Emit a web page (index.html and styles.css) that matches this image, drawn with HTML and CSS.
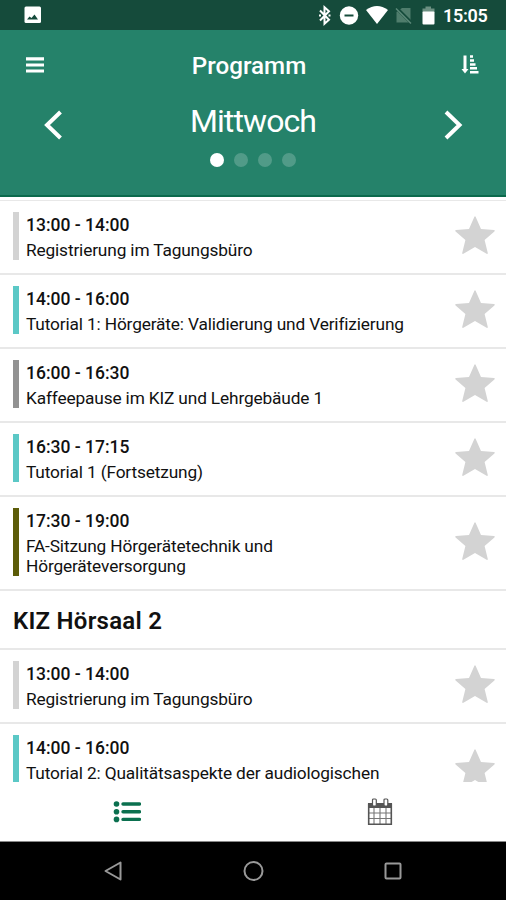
FILE: index.html
```html
<!DOCTYPE html>
<html lang="de">
<head>
<meta charset="utf-8">
<title>Programm</title>
<link rel="stylesheet" href="styles.css">
</head>
<body>
<svg width="0" height="0" class="defs"><symbol id="star" viewBox="0 0 40 38"><path d="M19.400.8q.6-.9 1.200 0L26 12.900l13 1.200q1.300.3.400 1.300L29.600 24l3.200 13q0 1.200-1.200.8L20 31 8.400 37.800q-1.200.4-1.200-.8l3.200-13L.6 15.400q-.9-1 .4-1.300l13-1.200z" fill="#d3d3d3"/></symbol></svg>
<div class="status">
  <svg class="photo" width="18" height="18" viewBox="0 0 18 18"><rect x=".5" y=".5" width="16.500" height="16.500" rx="1.500" fill="#fff"/><path d="M3 13.500l2.500-3 2 1.500 3-3.500 3.500 5z" fill="#154b3b"/></svg>
  <svg width="190" height="30" viewBox="0 0 190 30">
    <path d="M8 10.500l9 9.300-4.500 4V7.200l4.500 4-9 9.300" fill="none" stroke="#fff" stroke-width="2"/>
    <path d="M7 15.500h2M16.500 15.500h2" stroke="#fff" stroke-width="1.800"/>
    <circle cx="37" cy="15.500" r="9.200" fill="#fff"/><path d="M32.500 15.500h9" stroke="#154b3b" stroke-width="2"/>
    <path d="M54 10q11-8 22 0l-11 14z" fill="#fff"/>
    <path d="M90 8h8.500v14.500H84.500V12z" fill="#4f7d6c"/><path d="M84 7.500l16 16" stroke="#154b3b" stroke-width="3.400"/><path d="M84 8.500l15 15" stroke="#5d8979" stroke-width="1.500"/>
    <path d="M113.500 6.500h5.500V9h-5.500z" fill="#6d9082"/><path d="M110.500 8.500h12v4h-12z" fill="#6d9082"/><rect x="110.500" y="11.500" width="12" height="13" rx="1" fill="#fff"/>
  </svg>
  <span class="clock">15:05</span>
</div>
<header class="header">
  <div class="topbar">
    <svg width="20" height="20" viewBox="0 0 20 20"><path d="M1 3.800h18M1 10h18M1 16h18" stroke="#fff" stroke-width="3.200"/></svg>
    <h1>Programm</h1>
    <svg width="20" height="20" viewBox="0 0 20 20"><path d="M5 .5v15" stroke="#fff" stroke-width="3"/><path d="M1.500 14h7L5 18.500z" fill="#fff"/><path d="M10 1.500h3M10 5.500h4M10 9.400h5.500M10 13.300h7M10 17.200h8.500" stroke="#fff" stroke-width="2.500"/></svg>
  </div>
  <div class="dayrow">
    <svg width="20" height="30" viewBox="0 0 20 30"><path d="M17.500 2L4 15l13.500 13" fill="none" stroke="#fff" stroke-width="4"/></svg>
    <h2>Mittwoch</h2>
    <svg width="20" height="30" viewBox="0 0 20 30"><path d="M3 2l13.500 13L3 28" fill="none" stroke="#fff" stroke-width="4"/></svg>
  </div>
  <div class="dots"><i class="on"></i><i></i><i></i><i></i></div>
</header>
<main class="list">
  <div class="row"><span class="bar light"></span><div class="info"><b>13:00 - 14:00</b><p>Registrierung im Tagungsbüro</p></div><svg class="star"><use href="#star"/></svg></div>
  <div class="row"><span class="bar teal"></span><div class="info"><b>14:00 - 16:00</b><p>Tutorial 1: Hörgeräte: Validierung und Verifizierung</p></div><svg class="star"><use href="#star"/></svg></div>
  <div class="row"><span class="bar gray"></span><div class="info"><b>16:00 - 16:30</b><p>Kaffeepause im KIZ und Lehrgebäude 1</p></div><svg class="star"><use href="#star"/></svg></div>
  <div class="row"><span class="bar teal"></span><div class="info"><b>16:30 - 17:15</b><p>Tutorial 1 (Fortsetzung)</p></div><svg class="star"><use href="#star"/></svg></div>
  <div class="row"><span class="bar olive"></span><div class="info"><b>17:30 - 19:00</b><p>FA-Sitzung Hörgerätetechnik und<br>Hörgeräteversorgung</p></div><svg class="star"><use href="#star"/></svg></div>
  <h3>KIZ Hörsaal 2</h3>
  <div class="row"><span class="bar light"></span><div class="info"><b>13:00 - 14:00</b><p>Registrierung im Tagungsbüro</p></div><svg class="star"><use href="#star"/></svg></div>
  <div class="row two-line"><span class="bar teal"></span><div class="info"><b>14:00 - 16:00</b><p>Tutorial 2: Qualitätsaspekte der audiologischen</p></div><svg class="star"><use href="#star"/></svg></div>
</main>
<nav class="tabs">
  <div class="tab"><svg width="28" height="24" viewBox="0 0 28 24"><g fill="#0b704f"><circle cx="3.500" cy="4" r="2.800"/><circle cx="3.500" cy="11.700" r="2.800"/><circle cx="3.500" cy="19.400" r="2.800"/></g><path d="M10 4h16.500M10 11.700h16.500M10 19.400h16.500" stroke="#0b704f" stroke-width="3.400" stroke-linecap="round"/></svg></div>
  <div class="tab"><svg width="26" height="28" viewBox="0 0 26 28"><path d="M1 5h24v5H1z" fill="#555"/><path d="M7 10v16M13 10v16M19 10v16M2 15h22M2 20.500h22" fill="none" stroke="#777" stroke-width="1.100"/><path d="M1.700 5.500v20.800h22.600V5.500" fill="none" stroke="#555" stroke-width="1.600"/><rect x="5.500" y="1" width="3.800" height="7" rx="1" fill="#fff" stroke="#555" stroke-width="1.200"/><rect x="17" y="1" width="3.800" height="7" rx="1" fill="#fff" stroke="#555" stroke-width="1.200"/></svg></div>
</nav>
<footer class="sysnav">
  <svg width="20" height="22" viewBox="0 0 20 22"><path d="M17.500 2.500v17L2.500 11z"/></svg>
  <svg width="22" height="22" viewBox="0 0 22 22"><circle cx="11.500" cy="11" r="9"/></svg>
  <svg width="20" height="20" viewBox="0 0 20 20"><rect x="2.500" y="2.500" width="15" height="15" rx="1"/></svg>
</footer>
</body>
</html>
```
FILE: styles.css
```css
* { box-sizing: border-box; margin: 0; padding: 0; }
body { width: 506px; height: 900px; overflow: hidden; display: flex; flex-direction: column; background: #fff; color: #111; font-family: Roboto, "Liberation Sans", sans-serif; }
svg { display: block; flex: none; }
.defs { display: none; }
.status { height: 30px; flex: none; background: #154b3b; display: flex; align-items: center; padding-left: 24px; color: #fff; }
.photo { margin-right: 270px; }
.status .clock { margin-left: -59px; font-size: 18px; font-weight: 600; line-height: 30px; padding-top: 2px; letter-spacing: -.3px; }
.header { height: 167px; flex: none; background: #25826a; border-bottom: 2px solid #0b6a4c; color: #fff; }
.topbar { height: 70px; padding: 0 26px 0 25px; display: flex; align-items: center; justify-content: space-between; }
h1 { font-size: 24.200px; font-weight: 500; line-height: 28px; margin: 2px 7px 0 0; }
.dayrow { height: 50px; padding: 0 43px; display: flex; align-items: center; justify-content: space-between; }
h2 { font-size: 32px; font-weight: 400; line-height: 40px; margin-top: -8px; letter-spacing: -.9px; }
.dots { display: flex; justify-content: center; gap: 10px; padding-top: 3px; }
.dots i { width: 14px; height: 14px; border-radius: 50%; background: #519b88; }
.dots .on { background: #fff; }
.list { height: 585px; flex: none; overflow: hidden; padding-top: 3px; }
.list::before { content: ""; display: block; height: 1px; background: #e8e8e8; }
.row { display: flex; padding: 11px 11px 13px 13px; border-bottom: 2px solid #e8e8e8; }
.two-line { height: 94px; }
.bar { width: 6px; margin-right: 7px; flex: none; }
.light { background: #d3d3d3; }
.teal { background: #5bc8c6; }
.gray { background: #929292; }
.olive { background: #5c5c08; }
.info { flex: 1; }
.info b { display: block; font-size: 17.500px; font-weight: 500; line-height: 20px; padding-top: 3px; }
.info p { font-size: 17.300px; line-height: 20px; padding-top: 5px; white-space: nowrap; letter-spacing: -.15px; }
.star { width: 40px; height: 38px; align-self: center; margin-top: -3px; }
h3 { height: 59px; padding: 0 13px; border-bottom: 2px solid #e8e8e8; font-size: 24px; font-weight: 600; line-height: 60px; letter-spacing: .25px; }
.tabs { height: 60px; flex: none; display: flex; background: #fff; border-bottom: 1px solid #888; }
.tab { flex: 1; display: flex; align-items: center; justify-content: center; }
.sysnav { flex: 1; background: #000; display: flex; justify-content: space-between; align-items: center; padding: 0 103px; }
.sysnav svg { fill: none; stroke: #999; stroke-width: 2; stroke-linejoin: round; }
```
